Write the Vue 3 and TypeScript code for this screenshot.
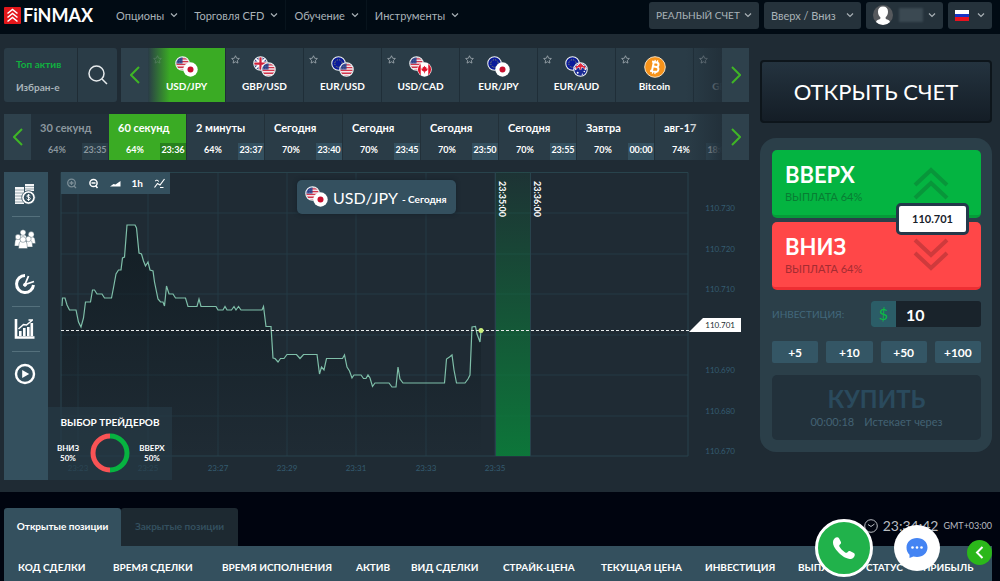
<script setup lang="ts">
import { ref } from 'vue'

interface Asset { name: string; first: string; second?: string }
interface Expiry { label: string; payout: string; time: string }

const menu = ['Опционы', 'Торговля CFD', 'Обучение', 'Инструменты']

const assets: Asset[] = [
  { name: 'USD/JPY', first: 'us', second: 'jp' },
  { name: 'GBP/USD', first: 'gb', second: 'us' },
  { name: 'EUR/USD', first: 'eu', second: 'us' },
  { name: 'USD/CAD', first: 'us', second: 'ca' },
  { name: 'EUR/JPY', first: 'eu', second: 'jp' },
  { name: 'EUR/AUD', first: 'eu', second: 'au' },
  { name: 'Bitcoin', first: 'btc' },
  { name: 'GBP/JPY', first: 'gb', second: 'jp' },
]
const activeAsset = ref(0)

const expiries: Expiry[] = [
  { label: '30 секунд', payout: '64%', time: '23:35' },
  { label: '60 секунд', payout: '64%', time: '23:36' },
  { label: '2 минуты', payout: '64%', time: '23:37' },
  { label: 'Сегодня', payout: '70%', time: '23:40' },
  { label: 'Сегодня', payout: '70%', time: '23:45' },
  { label: 'Сегодня', payout: '70%', time: '23:50' },
  { label: 'Сегодня', payout: '70%', time: '23:55' },
  { label: 'Завтра', payout: '70%', time: '00:00' },
  { label: 'авг-17', payout: '74%', time: '18:00' },
]
const activeExpiry = ref(1)

const gridY = [213, 254, 294, 335, 375, 416]
const gridX = [78, 148, 218, 287, 356, 426, 495]
const timeLabels = ['23:23', '23:25', '23:27', '23:29', '23:31', '23:33', '23:35']
const priceLabels = [
  { y: 211, text: '110.730' },
  { y: 252, text: '110.720' },
  { y: 292, text: '110.710' },
  { y: 373, text: '110.690' },
  { y: 414, text: '110.680' },
  { y: 454, text: '110.670' },
]
const line =
  '62,306 62.5,298 65,298 67,305 69.5,310 76,310 78.5,322 81,327 83.5,318 85.5,302 90.5,302 92.5,290 94.5,290 97,294 102,294 104.5,298 111.5,298 114,285 116,274 118.5,270 121,270 122.5,258 124.5,257 127,225 135,225 136.5,228 139,253 141.5,254 143.5,261 145.5,266 148,262 150,270 153,271 154.5,282 158,299 160.5,302 163,302 164.5,306 166.5,286 169,294 173,294 175.5,298 185.5,298 188,306.5 197,306.5 199,299 201,306.5 216,306.5 218,310 223,310 225,306.5 227,310 231.5,310 234,306.5 236,310 238.5,306.5 241,310 262,310 263.5,306.5 266,326.5 271,326.5 273,358 275,358.5 278,362 280.5,358.5 284,358.5 287,354.5 296.5,354.5 300,358.5 303.5,354.5 317,354.5 319.5,374 321.5,367 324,370 326.5,358.5 342.5,358.5 344.5,355 347,367 349.5,371 352,378 354,375 361,375 363.5,378.5 366,378.5 368,375 370,378 372.5,386.5 375,383 389,383 392,387 396,387 398,367 400,379 403,383 444.5,383 446.5,359 449.5,357 452,355 454,370 456.5,383 465,383 468,379 470,375 472,327 475.5,326.5 477,334 480,342 481,330.5'

const amount = ref('10')
const steps = [5, 10, 50, 100]
function addAmount(step: number) {
  amount.value = String((Number(amount.value) || 0) + step)
}

const columns = [
  { title: 'КОД СДЕЛКИ', width: 95 },
  { title: 'ВРЕМЯ СДЕЛКИ', width: 109 },
  { title: 'ВРЕМЯ ИСПОЛНЕНИЯ', width: 134 },
  { title: 'АКТИВ', width: 55 },
  { title: 'ВИД СДЕЛКИ', width: 92 },
  { title: 'СТРАЙК-ЦЕНА', width: 98 },
  { title: 'ТЕКУЩАЯ ЦЕНА', width: 104 },
  { title: 'ИНВЕСТИЦИЯ', width: 93 },
  { title: 'ВЫПЛАТА', width: 68 },
  { title: 'СТАТУС', width: 57 },
  { title: 'ПРИБЫЛЬ', width: 83 },
]
const tableWidth = columns.reduce((sum, c) => sum + c.width, 0)
</script>

<template>
  <div class="app">
    <svg class="defs" aria-hidden="true">
      <defs>
        <clipPath id="disc"><circle cx="8" cy="8" r="7" /></clipPath>
        <symbol id="flag-us" viewBox="0 0 16 16">
          <g clip-path="url(#disc)">
            <rect width="16" height="16" fill="#f3e4e8" />
            <path d="M0 3h16M0 6h16M0 9h16M0 12h16M0 15h16" stroke="#d2354c" stroke-width="1.4" />
            <rect width="8" height="8" fill="#2c3f86" />
            <path d="M2 3h5M2 5h5M2 7h5" stroke="#8b98c4" stroke-width=".6" stroke-dasharray="1 1" />
          </g>
          <circle cx="8" cy="8" r="7.2" fill="none" stroke="#eef1f3" stroke-width="1.1" />
        </symbol>
        <symbol id="flag-jp" viewBox="0 0 16 16">
          <circle cx="8" cy="8" r="7.7" fill="#fff" />
          <circle cx="8" cy="8" r="3.2" fill="#c8102e" />
        </symbol>
        <symbol id="flag-gb" viewBox="0 0 16 16">
          <g clip-path="url(#disc)">
            <rect width="16" height="16" fill="#28357f" />
            <path d="M1 1l14 14M15 1L1 15" stroke="#fff" stroke-width="2" />
            <path d="M8 0v16M0 8h16" stroke="#fff" stroke-width="4.4" />
            <path d="M8 0v16M0 8h16" stroke="#d0203a" stroke-width="2.4" />
          </g>
          <circle cx="8" cy="8" r="7.2" fill="none" stroke="#eef1f3" stroke-width="1.1" />
        </symbol>
        <symbol id="flag-eu" viewBox="0 0 16 16">
          <circle cx="8" cy="8" r="7.2" fill="#0a1a9a" stroke="#eef1f3" stroke-width="1.1" />
          <circle cx="8" cy="8" r="4" fill="none" stroke="#a9a657" stroke-width="1" stroke-dasharray="1 1.1" />
        </symbol>
        <symbol id="flag-ca" viewBox="0 0 16 16">
          <circle cx="8" cy="8" r="7.7" fill="#fff" />
          <g clip-path="url(#disc)">
            <path d="M0 0h4v16H0zM12 0h4v16h-4z" fill="#e0142c" />
            <path d="M8 4l1 1.600 1-.5-.3 2 1.600-.9-.5 1.500.8.5-2.400 1.800H8.400V12h-.8v-2H6.800L4.400 8.200l.8-.5-.5-1.500 1.600.9-.3-2 1 .5z" fill="#e0142c" />
          </g>
        </symbol>
        <symbol id="flag-au" viewBox="0 0 16 16">
          <g clip-path="url(#disc)">
            <rect width="16" height="16" fill="#1a2a94" />
            <path d="M2 8L8 1l6 7M8 0v8M3 5h10" fill="none" stroke="#fff" stroke-width="2.400" />
            <path d="M3 7l5-5 5 5M8 0v8M3 5h10" fill="none" stroke="#e0283c" stroke-width="1.400" />
            <circle cx="5" cy="11.500" r="1" fill="#fff" />
            <circle cx="12" cy="10" r=".8" fill="#fff" />
            <circle cx="10" cy="13" r=".7" fill="#fff" />
          </g>
          <circle cx="8" cy="8" r="7.2" fill="none" stroke="#eef1f3" stroke-width="1.100" />
        </symbol>
        <symbol id="coin-btc" viewBox="0 0 22 22">
          <circle cx="11" cy="11" r="10.300" fill="#f7931a" stroke="#f4ddbd" stroke-width="1" />
          <g transform="rotate(12 11 11)" fill="none" stroke="#fff" stroke-width="2">
            <path d="M7 6.300h4.800a2.200 2.200 0 0 1 0 4.400H8.800M8.800 10.700h3.600a2.400 2.400 0 0 1 0 4.900H7M8.800 6v10" />
            <path d="M9.800 4v2.500M12.300 4v2.500M9.800 15.500V18M12.300 15.500V18" stroke-width="1.300" />
          </g>
        </symbol>
        <symbol id="chevron" viewBox="0 0 8 6"><path d="M1 1.500l3 3 3-3" fill="none" stroke="#a9b1b6" stroke-width="1.200" /></symbol>
      </defs>
    </svg>

    <header class="header">
      <a class="logo" href="#">
        <svg width="17" height="17" viewBox="0 0 17 17" aria-hidden="true">
          <rect width="17" height="17" rx="1" fill="#e3171b" />
          <path d="M3.500 6.500l5-4 5 4M3.500 10.500l5-4 5 4M3.500 14.500l5-4 5 4" fill="none" stroke="#fff" stroke-width="1.600" />
        </svg>
        <span>FiNMAX</span>
      </a>
      <nav class="menu">
        <button v-for="item in menu" :key="item" type="button">
          {{ item }}<svg width="8" height="6" aria-hidden="true"><use href="#chevron" /></svg>
        </button>
      </nav>
      <div class="account">
        <button type="button" class="real">РЕАЛЬНЫЙ СЧЕТ<svg width="8" height="6" aria-hidden="true"><use href="#chevron" /></svg></button>
        <button type="button" class="mode">Вверх / Вниз<svg width="8" height="6" aria-hidden="true"><use href="#chevron" /></svg></button>
        <button type="button" class="user" aria-label="Профиль">
          <svg width="20" height="20" viewBox="0 0 20 20" aria-hidden="true">
            <circle cx="10" cy="10" r="10" fill="#56595d" />
            <path d="M10 1.500c3.300 0 5 2 5 5.200 0 2.400-1 4.300-2.400 5.500l.2 1.700c2 .7 3.600 1.200 4.200 3A10 10 0 0 1 10 20a10 10 0 0 1-7-3.100c.6-1.800 2.200-2.300 4.200-3l.2-1.700C6 11 5 9.100 5 6.700c0-3.200 1.700-5.200 5-5.200z" fill="#fff" />
          </svg>
          <span class="user-name"></span>
          <svg width="8" height="6" aria-hidden="true"><use href="#chevron" /></svg>
        </button>
        <button type="button" class="lang" aria-label="Русский">
          <svg width="14" height="11" viewBox="0 0 14 11" aria-hidden="true">
            <rect width="14" height="4" fill="#fff" /><rect y="4" width="14" height="4" fill="#1733c4" /><rect y="7" width="14" height="4" fill="#e8121f" />
          </svg>
          <svg width="8" height="6" aria-hidden="true"><use href="#chevron" /></svg>
        </button>
      </div>
    </header>

    <main class="main">
      <section class="market">
        <div class="assets">
          <div class="lists">
            <button type="button" class="on">Топ актив</button>
            <button type="button">Избран-е</button>
          </div>
          <button type="button" class="search" aria-label="Поиск">
            <svg width="20" height="20" viewBox="0 0 20 20" fill="none" stroke="#e6eaec" stroke-width="1.500" aria-hidden="true"><circle cx="8.500" cy="8.500" r="7.500" /><path d="M14 14l5 5" /></svg>
          </button>
          <button type="button" class="arrow" aria-label="Назад">
            <svg width="10" height="18" viewBox="0 0 10 18" aria-hidden="true"><path d="M9 1L1 9l8 8" fill="none" stroke="#3fb526" stroke-width="2" /></svg>
          </button>
          <div class="strip">
            <button v-for="(asset, i) in assets" :key="asset.name" type="button" class="asset" :class="{ active: i === activeAsset }" @click="activeAsset = i">
              <svg class="star" width="9" height="9" viewBox="0 0 10 10" aria-hidden="true"><path d="M5 .8l1.300 2.800 3 .3L7.100 6l.6 3L5 7.500 2.300 9l.6-3L.7 3.900l3-.3z" fill="none" stroke="#a4adb3" stroke-width=".9" /></svg>
              <svg v-if="asset.second" class="pair" width="24" height="22" viewBox="0 0 24 22" aria-hidden="true">
                <use :href="'#flag-' + asset.first" width="15" height="15" />
                <use :href="'#flag-' + asset.second" x="8" y="6" width="15" height="15" />
              </svg>
              <svg v-else class="pair" width="24" height="22" viewBox="0 0 24 22" aria-hidden="true"><use href="#coin-btc" x="1" width="22" height="22" /></svg>
              <span>{{ asset.name }}</span>
            </button>
          </div>
          <button type="button" class="arrow" aria-label="Вперёд">
            <svg width="10" height="18" viewBox="0 0 10 18" aria-hidden="true"><path d="M1 1l8 8-8 8" fill="none" stroke="#3fb526" stroke-width="2" /></svg>
          </button>
        </div>

        <div class="expiries">
          <button type="button" class="arrow" aria-label="Назад">
            <svg width="10" height="18" viewBox="0 0 10 18" aria-hidden="true"><path d="M9 1L1 9l8 8" fill="none" stroke="#3fb526" stroke-width="2" /></svg>
          </button>
          <div class="strip">
            <button v-for="(e, i) in expiries" :key="i" type="button" class="expiry" :class="{ active: i === activeExpiry, past: i === 0 }" @click="activeExpiry = i">
              <span class="label">{{ e.label }}</span>
              <span class="payout">{{ e.payout }}</span>
              <span class="time">{{ e.time }}</span>
            </button>
          </div>
          <button type="button" class="arrow" aria-label="Вперёд">
            <svg width="10" height="18" viewBox="0 0 10 18" aria-hidden="true"><path d="M1 1l8 8-8 8" fill="none" stroke="#3fb526" stroke-width="2" /></svg>
          </button>
        </div>

        <div class="board">
          <aside class="tools">
            <button type="button" aria-label="Активы">
              <svg width="22" height="22" viewBox="0 0 22 22" aria-hidden="true">
                <path d="M11 1h9v7h-9zM1 4h9v17H1z" fill="#f4f6f7" />
                <path d="M11 3.500h9M11 6h9M1 7h9M1 10h9M1 13h9M1 16h9M1 19h9" stroke="#34505e" stroke-width=".5" />
                <circle cx="14.500" cy="14.500" r="6.800" fill="#fff" stroke="#34505e" stroke-width=".8" />
                <circle cx="14.500" cy="14.500" r="4.700" fill="#34505e" />
                <path d="M16.300 12.700c-.4-.8-3.400-1.100-3.400.4 0 1.600 3.500.8 3.500 2.500 0 1.600-3.200 1.400-3.700.3M14.600 11v7" fill="none" stroke="#fff" stroke-width="1" />
              </svg>
            </button>
            <button type="button" class="open" aria-label="Трейдеры">
              <svg width="22" height="20" viewBox="0 0 22 20" fill="#fff" stroke="#34505e" stroke-width=".4" aria-hidden="true">
                <path d="M5.500 13V8.500c0-2 1.500-3 3.500-3s3.500 1 3.500 3V13z" /><circle cx="9" cy="3.600" r="2.800" />
                <path d="M13 14.500V11c0-2.300 1.500-3.500 4-3.500s4 1.200 4 3.500l.5 3.500z" /><circle cx="17.200" cy="5.500" r="2.900" />
                <path d="M.5 17l.5-4.500c.2-2 1.300-3 3-3s3 1 3.200 3V17z" /><circle cx="4" cy="8" r="2.700" />
                <path d="M11.500 18l.5-4c.2-2 1.300-3 3-3s3 1 3.200 3l.5 4z" /><circle cx="14.500" cy="10" r="2.700" />
                <path d="M4.500 19.500L5 15c.3-2.300 1.800-3.500 4-3.500s3.700 1.200 4 3.500l.5 4.500z" /><circle cx="9" cy="10.500" r="2.900" />
              </svg>
            </button>
            <button type="button" aria-label="История">
              <svg width="22" height="22" viewBox="0 0 22 22" fill="none" stroke="#fff" aria-hidden="true">
                <path d="M11 2.500a8.500 8.500 0 1 0 8.500 9.500" stroke-width="3" />
                <path d="M14.500 3L11 11.500l9-3" stroke-width="1.800" /><circle cx="11" cy="11.800" r="1.500" fill="#fff" />
              </svg>
            </button>
            <button type="button" aria-label="Графики">
              <svg width="22" height="22" viewBox="0 0 22 22" aria-hidden="true">
                <path d="M2 1v18.500h18.500" fill="none" stroke="#fff" stroke-width="2.600" />
                <path d="M5 13h2.600v5H5zM9 10h2.600v8H9zM13 9h2.600v9H13zM16.500 5h2.600v13h-2.600z" fill="#fff" />
                <path d="M4.500 11l5-4.500 3 .5L18 2.500M14.500 2h4.500" fill="none" stroke="#fff" stroke-width="1.500" />
              </svg>
            </button>
            <button type="button" class="open" aria-label="Видео">
              <svg width="22" height="22" viewBox="0 0 22 22" aria-hidden="true"><circle cx="11" cy="11" r="9" fill="none" stroke="#fff" stroke-width="2.400" /><path d="M8.200 7l7 4-7 4z" fill="#fff" /></svg>
            </button>
          </aside>

          <div class="chart">
            <svg class="plot" viewBox="48 172 701 308" role="img" aria-label="График USD/JPY">
              <defs>
                <linearGradient id="area" x1="0" y1="0" x2="0" y2="1"><stop offset="0" stop-color="#0f1a20" stop-opacity=".75" /><stop offset="1" stop-color="#0f1a20" stop-opacity="0" /></linearGradient>
                <linearGradient id="band" x1="0" y1="0" x2="0" y2="1"><stop offset="0" stop-color="#0c7a3a" stop-opacity=".1" /><stop offset="1" stop-color="#0c7a3a" stop-opacity=".95" /></linearGradient>
              </defs>
              <path v-for="y in gridY" :key="'y' + y" :d="`M61 ${y}H688`" class="grid" />
              <path v-for="x in gridX" :key="'x' + x" :d="`M${x} 172V456`" class="grid" />
              <path d="M61 172.500H688V456H61z" class="frame" />
              <polygon :points="'62,456 ' + line + ' 481,456'" fill="url(#area)" />
              <rect x="496" y="172" width="34" height="284" fill="url(#band)" />
              <path d="M495.500 172V456M530.500 172V456" class="frame" />
              <polyline :points="line" fill="none" stroke="#7fbfa9" stroke-width="1.200" />
              <path d="M61 330.500H690" stroke="#e8ecec" stroke-dasharray="3 2" />
              <circle cx="481" cy="330.500" r="2.500" fill="#c9ee7c" />
              <text v-for="p in priceLabels" :key="p.text" :x="735" :y="p.y" text-anchor="end" class="tick">{{ p.text }}</text>
              <text v-for="(t, i) in timeLabels" :key="t" :x="gridX[i]" y="471" text-anchor="middle" class="tick">{{ t }}</text>
              <polygon points="689,332 703,318 741,318 741,332" fill="#fff" />
              <text x="735" y="328" text-anchor="end" class="tag">110.701</text>
              <text transform="translate(499 181) rotate(90)" class="deadline">23:35:00</text>
              <text transform="translate(534 181) rotate(90)" class="deadline">23:36:00</text>
            </svg>

            <div class="toolbar">
              <button type="button" aria-label="Увеличить" class="dim">
                <svg width="11" height="11" viewBox="0 0 11 11" fill="none" stroke="#fff" stroke-width="1.300" aria-hidden="true"><circle cx="5.500" cy="5" r="3.800" /><path d="M3.500 5h4M5.500 3v4M8 8l2 2" /></svg>
              </button>
              <button type="button" aria-label="Уменьшить">
                <svg width="11" height="11" viewBox="0 0 11 11" fill="none" stroke="#fff" stroke-width="1.500" aria-hidden="true"><circle cx="5.500" cy="5" r="3.600" /><path d="M3.500 5h4M7.500 7.500l2 2.500" /></svg>
              </button>
              <button type="button" aria-label="Тип графика">
                <svg width="11" height="11" viewBox="0 0 11 11" aria-hidden="true"><path d="M0 8.500l3.500-2.500 2 .5L10.500 3v5.500z" fill="#fff" /></svg>
              </button>
              <button type="button">1h</button>
              <button type="button" aria-label="Индикаторы">
                <svg width="11" height="11" viewBox="0 0 11 11" fill="none" stroke="#fff" aria-hidden="true"><path d="M.5 9.500l3-4 2.500 1.500L10.500 1" stroke-width="1.200" /><path d="M1 3l2-1 2 1.500M6 9.500h3.500" /></svg>
              </button>
            </div>

            <div class="title">
              <svg width="24" height="22" viewBox="0 0 24 22" aria-hidden="true"><use href="#flag-us" width="15" height="15" /><use href="#flag-jp" x="8" y="6" width="15" height="15" /></svg>
              <strong>USD/JPY</strong><span>- Сегодня</span>
            </div>

            <div class="mood">
              <h2>ВЫБОР ТРЕЙДЕРОВ</h2>
              <div class="mood-row">
                <p>ВНИЗ<br />50%</p>
                <svg width="40" height="40" viewBox="0 0 40 40" fill="none" stroke-width="5" aria-hidden="true"><path d="M20 3a17 17 0 0 0 0 34" stroke="#f95355" /><path d="M20 3a17 17 0 0 1 0 34" stroke="#07b340" /></svg>
                <p>ВВЕРХ<br />50%</p>
              </div>
            </div>
          </div>
        </div>
      </section>

      <section class="trade">
        <button type="button" class="open-account">ОТКРЫТЬ СЧЕТ</button>
        <div class="ticket">
          <div class="direction">
            <button type="button" class="up">
              <span><b>ВВЕРХ</b><small>ВЫПЛАТА 64%</small></span>
              <svg width="36" height="34" viewBox="0 0 36 34" fill="none" stroke="#08963a" stroke-width="4" aria-hidden="true"><path d="M2 19L18 4l16 15M2 32l16-15 16 15" /></svg>
            </button>
            <button type="button" class="down">
              <span><b>ВНИЗ</b><small>ВЫПЛАТА 64%</small></span>
              <svg width="36" height="34" viewBox="0 0 36 34" fill="none" stroke="#cf3a3c" stroke-width="4" aria-hidden="true"><path d="M2 2l16 15L34 2M2 15l16 15 16-15" /></svg>
            </button>
            <output class="price">110.701</output>
          </div>
          <div class="invest">
            <label for="amount">ИНВЕСТИЦИЯ:</label>
            <div class="field"><span>$</span><input id="amount" v-model="amount" type="text" /></div>
          </div>
          <div class="steps">
            <button v-for="s in steps" :key="s" type="button" @click="addAmount(s)">+{{ s }}</button>
          </div>
          <button type="button" class="buy"><b>КУПИТЬ</b><span><time>00:00:18</time>Истекает через</span></button>
        </div>
      </section>
    </main>

    <section class="positions">
      <div class="positions-head">
        <div class="tabs">
          <button type="button" class="on">Открытые позиции</button>
          <button type="button">Закрытые позиции</button>
        </div>
        <div class="clock">
          <svg width="14" height="14" viewBox="0 0 14 14" fill="none" stroke="#b9bdc2" aria-hidden="true"><circle cx="7" cy="7" r="6.300" /><path d="M4 5.500l3 2 3.500-2.500" /></svg>
          <time>23:34:42</time><small>GMT+03:00</small>
        </div>
      </div>
      <table>
        <colgroup><col v-for="c in columns" :key="c.title" :style="{ width: (c.width / tableWidth) * 100 + '%' }" /></colgroup>
        <thead><tr><th v-for="c in columns" :key="c.title" scope="col">{{ c.title }}</th></tr></thead>
      </table>
    </section>

    <div class="floating">
      <button type="button" class="call" aria-label="Позвонить">
        <svg width="24" height="24" viewBox="0 0 24 24" aria-hidden="true"><path d="M2.500 2.500C4 1 6.200.8 7 2.300l1.800 3.400c.6 1.100.1 2-.9 2.900-1 .9-.8 1.500 0 2.700 1.300 2 2.900 3.600 4.900 4.900 1.200.8 1.900.9 2.700 0 .9-1 1.800-1.500 2.900-.9l3.400 1.800c1.500.8 1.200 2.900-.2 4.300-1.900 1.900-4.800 2-8 .4C9.500 20 4 14.500 2 10.500c-1.500-3.200-1.400-6.200.5-8z" fill="#fff" /></svg>
      </button>
      <button type="button" class="chat" aria-label="Чат">
        <svg width="22" height="20" viewBox="0 0 22 20" aria-hidden="true"><path d="M11 0c6 0 10.500 4 10.500 9.500S17 19 11 19c-1.300 0-2.500-.2-3.600-.5L3.500 20v-3.300C1.500 15 .5 12.500.5 9.500.5 4 5 0 11 0z" fill="#4484f3" /><g fill="#fff"><circle cx="6.500" cy="9.500" r="1.300" /><circle cx="11" cy="9.500" r="1.300" /><circle cx="15.500" cy="9.500" r="1.300" /></g></svg>
      </button>
      <button type="button" class="collapse" aria-label="Развернуть">
        <svg width="9" height="13" viewBox="0 0 9 13" aria-hidden="true"><path d="M7.500 1L2 6.500 7.500 12" fill="none" stroke="#fff" stroke-width="2" /></svg>
      </button>
    </div>
  </div>
</template>

<style>
body { background: #00040f; }
</style>

<style scoped>
.app, .app * { box-sizing: border-box; }
.app { position: relative; min-height: 100vh; overflow: hidden; font-family: Lato, "Noto Sans", sans-serif; font-size: 12px; color: #fff; background: #00040f; }
.defs { position: absolute; width: 0; height: 0; }
button { margin: 0; padding: 0; border: 0; background: none; color: inherit; font: inherit; cursor: pointer; }
svg { flex: none; }

.header { display: flex; align-items: center; height: 34px; padding: 0 8px 4px 4px; background: #010b14; color: #a9b2b8; font-size: 11px; }
.logo { display: flex; align-items: center; gap: 2px; width: 104px; color: #fff; font-size: 18px; font-weight: 700; text-decoration: none; }
.menu { display: flex; flex: 1; }
.menu button { display: flex; align-items: center; gap: 6px; height: 30px; padding: 0 7px 0 8px; border-right: 1px solid #08141d; white-space: nowrap; }
.menu button:last-child { border: 0; }
.account { display: flex; gap: 5px; }
.account button { display: flex; align-items: center; justify-content: space-between; height: 27px; padding: 0 7px; border-radius: 3px; background: #25323b; white-space: nowrap; }
.account .real { width: 110px; font-size: 10px; }
.mode { width: 97px; }
.user { width: 77px; }
.user-name { width: 24px; height: 14px; background: #3b4952; filter: blur(1px); }
.lang { width: 44px; }

.main { display: flex; gap: 11px; padding: 14px 8px 12px 4px; background: #1f2b34; }
.market { flex: 1; min-width: 0; display: flex; flex-direction: column; gap: 12px; }
.assets { display: flex; height: 54px; }
.lists { display: flex; flex-direction: column; justify-content: space-around; width: 73px; padding: 4px 0 4px 12px; background: #2a3c47; border-radius: 3px 0 0 3px; }
.lists button { text-align: left; color: #a9b4ba; font-size: 10px; font-weight: 700; line-height: 16px; }
.lists .on { color: #10b040; }
.search { display: grid; place-items: center; width: 40px; margin-right: 4px; border-left: 1px solid #1f2c35; background: #2a3c47; border-radius: 0 3px 3px 0; }
.arrow { flex: none; display: grid; place-items: center; width: 27px; background: #2e414c; }
.strip { position: relative; flex: 1; min-width: 0; display: flex; overflow: hidden; background: #2a3c47; }
.strip::after { content: ""; position: absolute; inset: 0 0 0 auto; width: 36px; background: linear-gradient(90deg, transparent, #22303a); pointer-events: none; }
.asset { position: relative; flex: none; display: flex; flex-direction: column; align-items: center; gap: 1px; width: 78px; padding-top: 8px; border-right: 1px solid #1f2e38; font-size: 10px; font-weight: 700; line-height: 14px; }
.asset.active { background: linear-gradient(90deg, #2a3c47 0, #3aab24 22px); }
.star { position: absolute; left: 5px; top: 7px; }
.active .star { opacity: .3; }

.expiries { display: flex; height: 46px; }
.expiry { flex: none; display: grid; grid-template-columns: 1fr 26px; grid-template-rows: 29px 17px; width: 78px; border-right: 1px solid #223039; font-size: 9px; font-weight: 700; text-align: left; }
.expiry .label { grid-column: 1 / 3; padding: 6px 0 0 9px; font-size: 11px; line-height: 16px; white-space: nowrap; }
.expiry .payout { padding-left: 17px; line-height: 14px; }
.expiry .time { background: #34505f; line-height: 14px; text-align: center; }
.expiry.active { background: #3aab24; }
.expiry.active .time { background: #27801c; }
.expiry.past { background: #22303a; color: #8b979e; }
.expiry.past .time { background: #2a3d48; }

.board { display: flex; }
.tools { display: flex; flex-direction: column; width: 44px; padding: 0 8px; background: #34505e; }
.tools button { display: grid; place-items: center; height: 45px; padding-right: 2px; border-bottom: 1px solid #54707c; }
.tools .open { border-color: transparent; }
.chart { position: relative; flex: 1; min-width: 0; }
.plot { display: block; width: 100%; height: auto; }
.grid { stroke: #243a44; fill: none; }
.frame { stroke: #28434c; fill: none; }
.tick { fill: #345b70; font-size: 8px; }
.tag { fill: #222c33; font-size: 8px; }
.deadline { fill: #fff; font-size: 9px; font-weight: 700; }
.toolbar { position: absolute; top: 0; left: 13px; display: flex; width: 109px; height: 22px; background: #34505e; }
.toolbar button { flex: 1; display: grid; place-items: center; font-size: 10px; font-weight: 700; }
.toolbar .dim { opacity: .35; }
.title { position: absolute; top: 8px; left: 249px; display: flex; align-items: center; gap: 4px; width: 159px; height: 34px; padding: 0 8px; border-radius: 5px; background: #34505f; box-shadow: 0 0 4px #15202a; font-size: 10px; white-space: nowrap; }
.title strong { font-size: 16px; font-weight: 400; }
.title span { padding-top: 3px; font-weight: 700; }
.mood { position: absolute; bottom: 0; left: 0; width: 124px; height: 73px; padding-top: 8px; background: #263a45b0; text-align: center; }
.mood h2 { margin: 0; font-size: 10px; line-height: 14px; }
.mood-row { display: flex; align-items: center; justify-content: center; gap: 8px; margin-top: 4px; }
.mood p { width: 28px; margin: 0; font-size: 8px; font-weight: 700; line-height: 10px; }

.trade { flex: none; width: 232px; padding-top: 12px; }
.open-account { display: block; width: 100%; height: 63px; border: 2px solid #0d151b; border-radius: 4px; background: linear-gradient(#24333f, #141d26); font-size: 22px; }
.ticket { margin-top: 15px; padding: 12px 11px 12px 12px; border-radius: 16px; background: #2b3f49; }
.direction { position: relative; display: grid; gap: 4px; }
.direction button { display: flex; align-items: center; justify-content: space-between; height: 68px; padding: 0 32px 0 13px; border-bottom: 3px solid; border-radius: 5px; text-align: left; }
.direction b { display: block; color: #fff; font-size: 22px; line-height: 28px; }
.direction small { display: block; font-size: 11px; line-height: 16px; }
.direction .up { background: #04b441; border-color: #069b39; }
.up small { color: #087d33; }
.direction .down { background: #ff4748; border-color: #ee2e33; }
.down small { color: #a42c32; }
.price { position: absolute; right: 12px; top: 53px; width: 73px; height: 32px; border: 3px solid #24394a; border-radius: 5px; background: #fff; color: #17212a; font-size: 11px; font-weight: 700; line-height: 26px; text-align: center; }
.invest { display: flex; align-items: center; justify-content: space-between; margin-top: 11px; color: #42687c; font-size: 10px; }
.field { display: flex; width: 110px; height: 26px; border-radius: 3px; overflow: hidden; background: #19232b; }
.field span { flex: none; width: 25px; background: #2b5d67; color: #0cba45; font-size: 16px; line-height: 26px; text-align: center; }
.field input { min-width: 0; flex: 1; padding: 0 10px; border: 0; outline: 0; background: none; color: #fff; font: 700 16px Lato, sans-serif; }
.steps { display: grid; grid-template-columns: repeat(4, 1fr); gap: 8px; margin-top: 14px; }
.steps button { height: 22px; border-radius: 2px; background: #345665; font-weight: 700; }
.buy { display: flex; flex-direction: column; align-items: center; justify-content: center; width: 100%; height: 65px; margin-top: 12px; border-radius: 5px; background: #22313b; color: #426273; font-size: 11px; }
.buy b { color: #2a4a5d; font-size: 24px; line-height: 28px; }
.buy span { display: flex; gap: 10px; line-height: 18px; }

.positions { padding: 16px 8px 0 4px; }
.positions-head { display: flex; justify-content: space-between; }
.tabs { display: flex; }
.tabs button { width: 117px; height: 38px; padding-bottom: 3px; border-radius: 3px 3px 0 0; background: #1d2931; color: #34505f; font-size: 10px; font-weight: 700; }
.tabs .on { background: #34505e; color: #fff; }
.clock { display: flex; align-items: center; gap: 5px; padding-bottom: 3px; color: #b9bdc2; white-space: nowrap; }
.clock time { font-size: 14px; }
.clock small { font-size: 9px; }
table { width: 100%; table-layout: fixed; border-collapse: collapse; background: #34505e; }
th { height: 35px; padding: 6px 0 0 14px; font-size: 10px; font-weight: 700; text-align: left; white-space: nowrap; }

.floating { position: absolute; right: 8px; bottom: 4px; display: flex; align-items: center; }
.floating button { display: grid; place-items: center; border-radius: 50%; }
.floating .call { width: 58px; height: 58px; border: 3px solid #fff; background: #21b24b; }
.chat { width: 46px; height: 46px; margin-left: 21px; background: #fff; }
.collapse { width: 25px; height: 25px; margin: 8px 0 0 27px; background: #2bb71a; }
</style>
